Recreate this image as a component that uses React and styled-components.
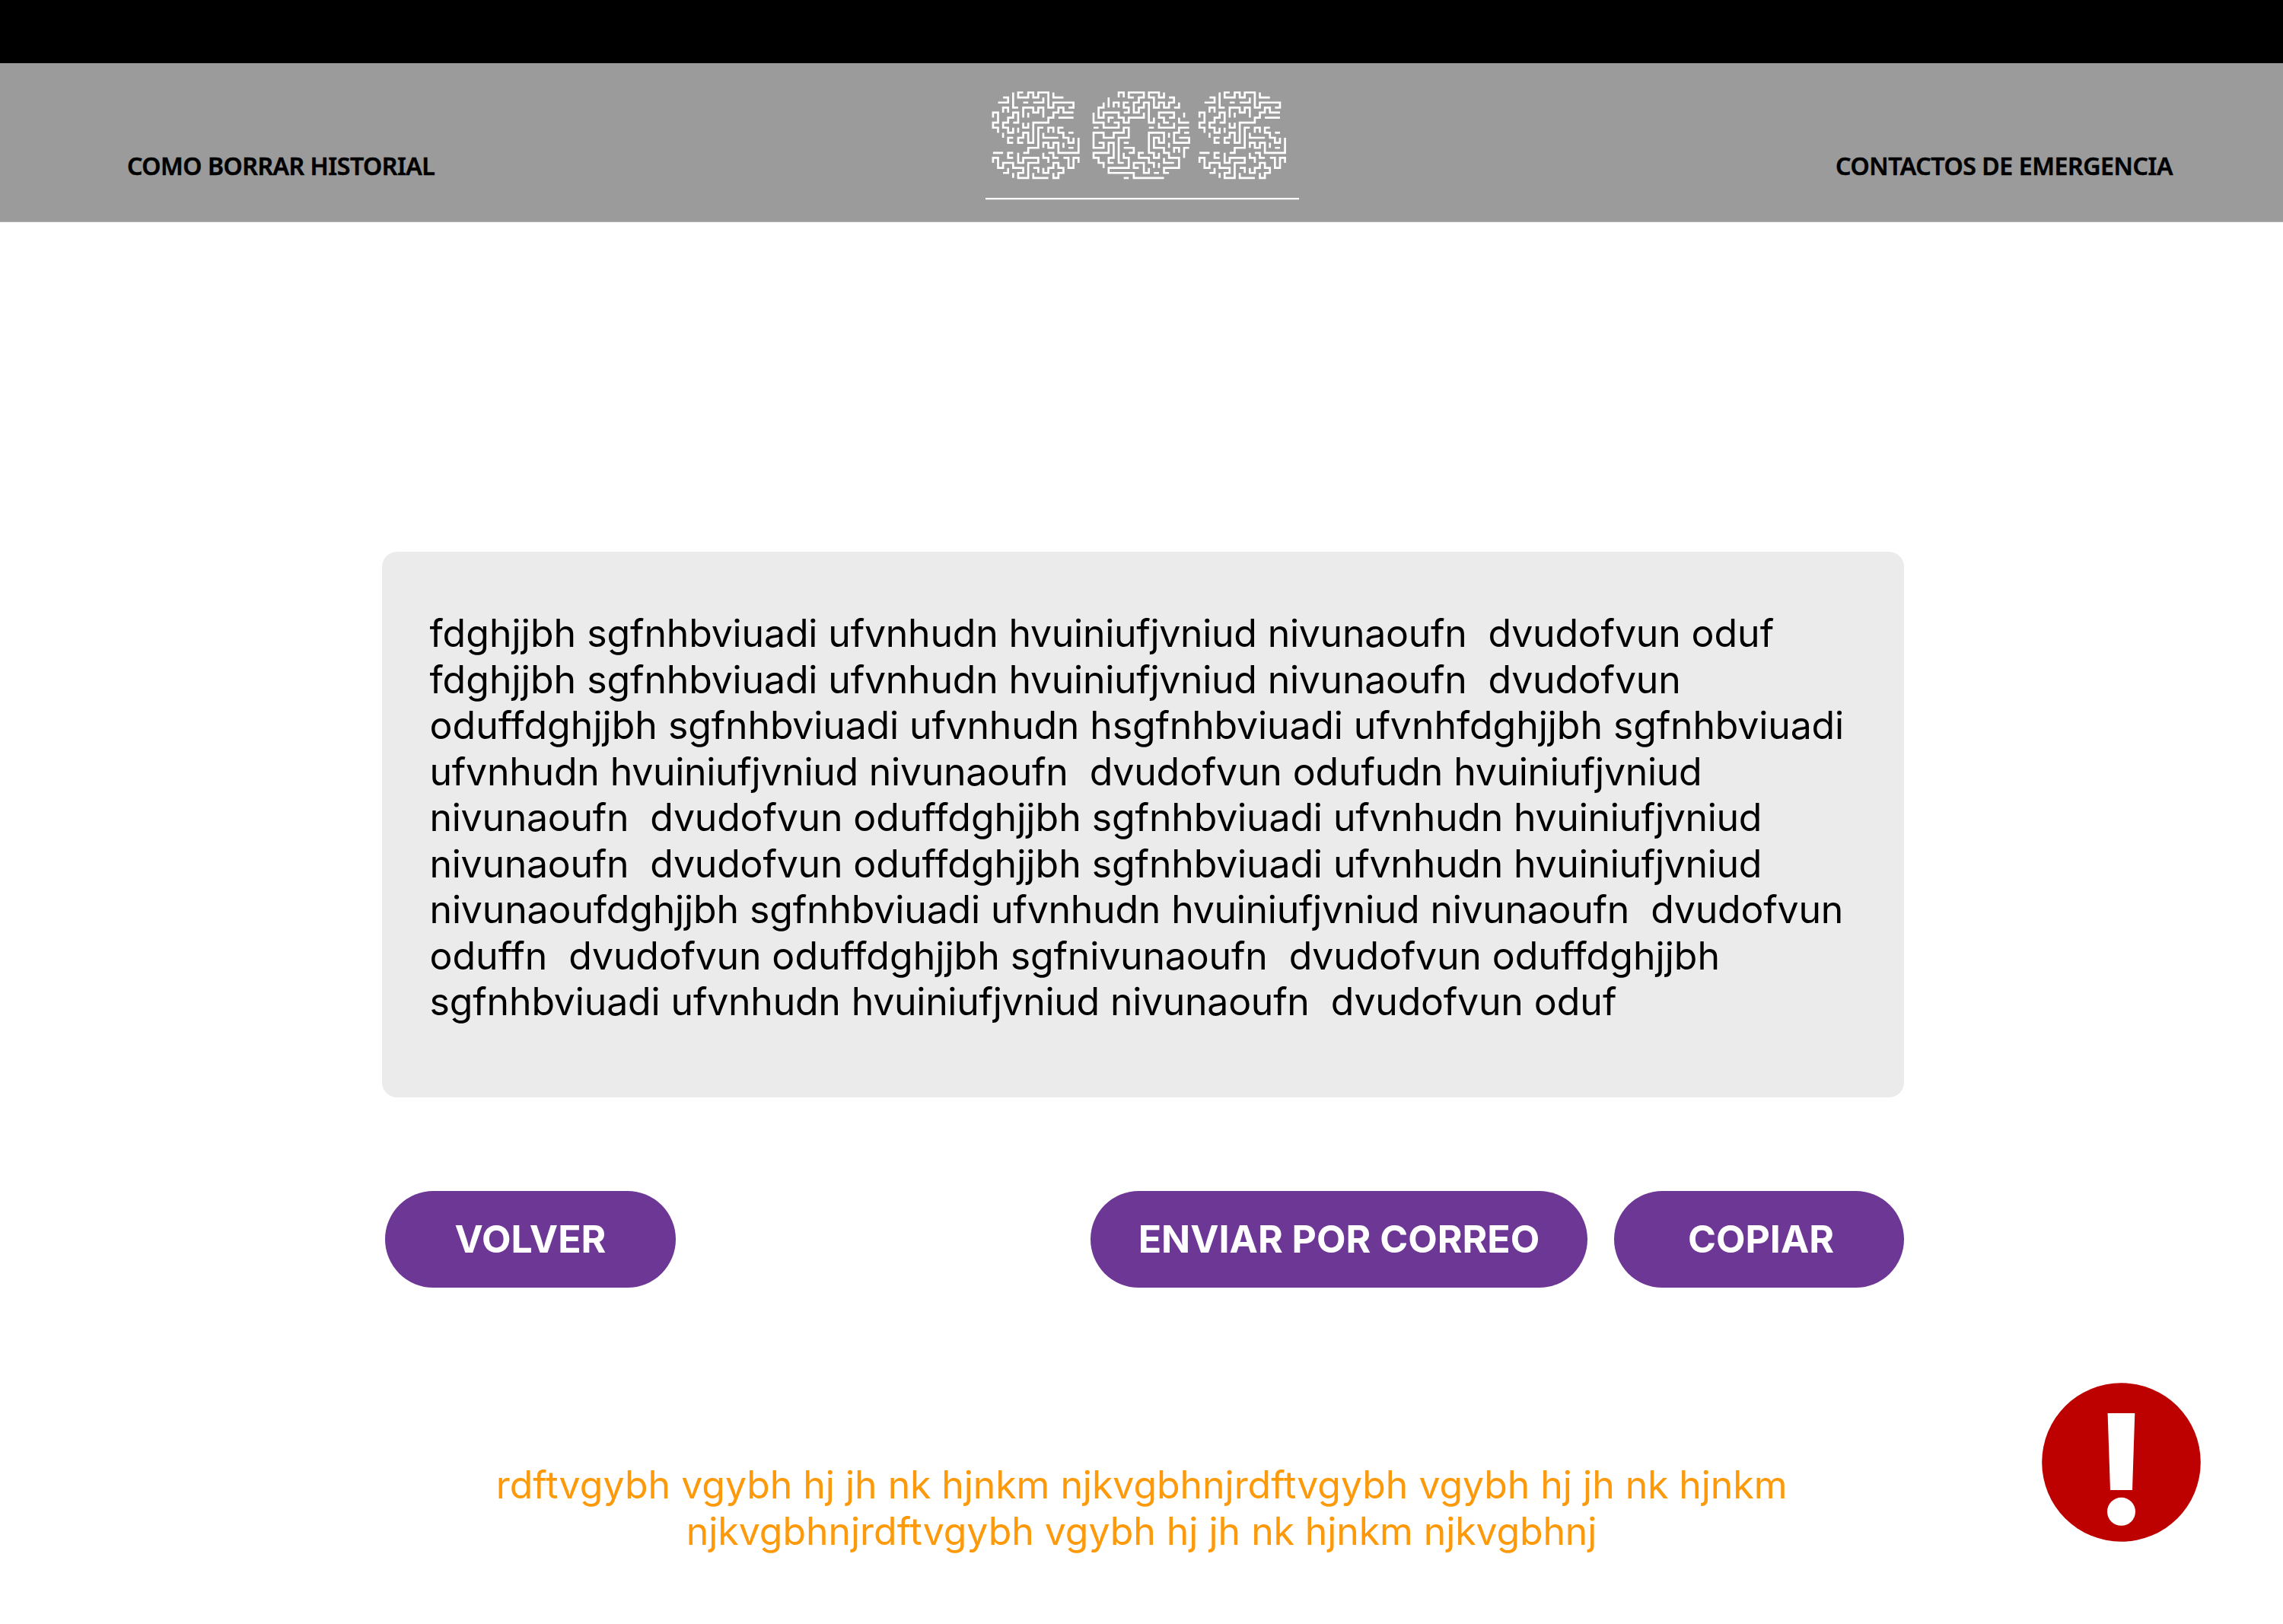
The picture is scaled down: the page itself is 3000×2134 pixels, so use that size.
import React from "react";
import styled, { createGlobalStyle } from "styled-components";

const GlobalStyle = createGlobalStyle`
  *, *::before, *::after { box-sizing: border-box; }
  body { margin: 0; background: #fff; }
`;

const Page = styled.div`
  width: 3000px;
  height: 2134px;
  overflow: hidden;
  display: flex;
  flex-direction: column;
  background: #fff;
  font-family: Inter, "Liberation Sans", sans-serif;
  font-size: 50px;
  line-height: 60.5px;
  color: #000;
`;

const TopBar = styled.div`
  height: 83px;
  flex: none;
  background: #000;
`;

const Header = styled.header`
  height: 209px;
  flex: none;
  display: grid;
  grid-template-columns: 1fr 412px 1fr;
  padding: 0 145px 0 167px;
  border-bottom: 1px solid #b4b4b4;
  background: #9b9b9b;
`;

const NavLink = styled.a`
  margin-top: 113px;
  justify-self: ${(p) => (p.$end ? "end" : "start")};
  font-family: "Noto Sans", "Open Sans", sans-serif;
  font-size: 32px;
  font-weight: 600;
  line-height: 44px;
  letter-spacing: ${(p) => p.$tracking};
  -webkit-text-stroke: 0.5px #000;
  white-space: nowrap;
`;

const Logo = styled.svg`
  display: block;
  width: 412px;
  height: 150px;
  margin: 31px 0 0 -10px;
  fill: none;
  stroke: #fff;
`;

const Main = styled.main`
  flex: 1;
  display: flex;
  flex-direction: column;
  align-items: flex-start;
  padding: 433px 0 0 502px;
`;

const Panel = styled.section`
  width: 2000px;
  height: 717px;
  padding: 77px 0 0 62.5px;
  border-radius: 20px;
  background: #ebebeb;
`;

const Paragraph = styled.p`
  margin: 0;
  white-space: pre;
`;

const Word = styled.span`
  letter-spacing: ${(p) => p.$tracking}px;
`;

const Actions = styled.div`
  display: flex;
  width: 1996px;
  margin: 123px 0 0 4px;
  gap: 35px;
`;

const Button = styled.button`
  width: ${(p) => p.$width}px;
  height: 127px;
  padding: 0 0 0 ${(p) => p.$indent || 0}px;
  border: 0;
  border-radius: 64px;
  background: #6d3795;
  color: #fff;
  font: inherit;
  font-weight: 700;
  white-space: nowrap;
  margin-right: ${(p) => (p.$pushRest ? "auto" : 0)};
`;

const Bottom = styled.footer`
  display: flex;
  width: 2390px;
  margin-top: 125px;
  align-items: flex-start;
`;

const Note = styled.p`
  width: 1996px;
  margin: 104px 0 0;
  text-align: center;
  white-space: pre;
  color: #fc9a0c;
`;

const AlertIcon = styled.svg`
  flex: none;
  width: 209px;
  height: 209px;
  margin-left: 185px;
`;

const MAZE_S =
  "M4 0V3H5 M6 0H5V1H7V0H8V1H9V0H11V3H12V2H16V3H15 M12 0V1H14 M2 1H3V2H1 M6 2H7 M8 2H10V1 M2 4V3H3V4 " +
  "M6 5V3H8V4H9V3H10V5 M7 4V5 M0 5V4H1V6H0V7H1V8 M4 6H5V4H4V5H3V6H2V7H3V8H4V7 M5 7V8 M2 8V9 M6 6V7H7V6 " +
  "M16 4H14V3H13V4H12V5H11V6H8V10H7V8H6V9H5V10H6 M13 5H16 M10 7H9V11H7V12H6 M11 8V7H12V8 " +
  "M14 7H13V8H14V9H15V10H16V9 M15 8H16 M10 8V9H13 M17 9V12H13V10H12V11H11V10H10V11 M14 10V11 M15 11H16 " +
  "M4 9H3V10H4 M0 12H2 M4 12H3V13H4 M5 12V14H6V13H9V14H7V17H5V16H6V15H4V14H2V15H1V13H0V14 " +
  "M10 12V13H11V14 M11 12H12V13H13 M14 13H15V15H16V13H17V14 M2 16H3V15 M4 16V17 M8 15H9V16 M8 16V17H11 " +
  "M10 15V16H11V15H12V14H13V15H14V16H13V17H12V16";

const MAZE_O =
  "M5 1V0H6V1 M8 1H7V0H10V1H9V2H8V4H9V3H10V2H11V6H12V5 M14 0V1H13V0H11V1H12V3H13V2H14V3H15V2H16V1H15 " +
  "M16 3H17V2 M3 1V3 M4 3V2H5V3 M7 2H6V3H7V4H6 M2 2V3H1V5H2V4H5V5H6V6H7V5H10V4 M3 6V5H4 M0 4V6H2V7H5V6H4 " +
  "M0 7H1 M11 7H12 M15 5H16V4H13V5H14V6H15 M18 4V5 M17 5V6H19 M13 6V7H16V6 M19 7H17V8H16V10H19V9H17 " +
  "M18 8H19 M15 8V9 M15 10V11 M1 10H2V11H0V8H2V9H4V8H6V7H7V9H5V14H6 M6 10H7 M6 11H8V12H7 " +
  "M2 15V14H1V13H0V12H3V10H4V13H3V14H4 M6 12V13H7V15H3V16H8V17H14 M6 17H7 " +
  "M13 12V13H12V12H11V8H14V10H13V9H12V11H14V12H15V13H17V15H14V16H15 M14 13V14H16 M16 12V11H17V12 " +
  "M19 11H18V13 M10 12H9V13H11V14H12V15 M13 14V15 M12 16H13 M9 15H8V14H10V16H11V15";

const PITCH = 6.61;

const LETTERS = [
  { x: 9.9, path: MAZE_S },
  { x: 142, path: MAZE_O },
  { x: 281.2, path: MAZE_S },
];

function MazeLogo() {
  return (
    <Logo viewBox="0 0 412 150" role="img" aria-label="SOS">
      {LETTERS.map(({ x, path }) => (
        <path
          key={x}
          d={path}
          transform={`translate(${x} 7.5) scale(${PITCH})`}
          strokeWidth={2.65 / PITCH}
        />
      ))}
      <path d="M0 147.2H412" strokeWidth="2.2" />
    </Logo>
  );
}

// Per-letter advance corrections, in pixels, spread evenly over each word.
const ADVANCE = { u: -0.47, n: -0.47, i: -0.47, v: -0.47, f: 0.45, t: 0.6 };

function Tracked({ text }) {
  return text.split(/(\s+)/).map((part, i) => {
    if (!part.trim()) return part;
    const total = [...part].reduce((sum, ch) => sum + (ADVANCE[ch] || 0), 0);
    return (
      <Word key={i} $tracking={(total / part.length).toFixed(3)}>
        {part}
      </Word>
    );
  });
}

const BODY = [
  "fdghjjbh sgfnhbviuadi ufvnhudn hvuiniufjvniud nivunaoufn  dvudofvun oduf",
  "fdghjjbh sgfnhbviuadi ufvnhudn hvuiniufjvniud nivunaoufn  dvudofvun",
  "oduffdghjjbh sgfnhbviuadi ufvnhudn hsgfnhbviuadi ufvnhfdghjjbh sgfnhbviuadi",
  "ufvnhudn hvuiniufjvniud nivunaoufn  dvudofvun odufudn hvuiniufjvniud",
  "nivunaoufn  dvudofvun oduffdghjjbh sgfnhbviuadi ufvnhudn hvuiniufjvniud",
  "nivunaoufn  dvudofvun oduffdghjjbh sgfnhbviuadi ufvnhudn hvuiniufjvniud",
  "nivunaoufdghjjbh sgfnhbviuadi ufvnhudn hvuiniufjvniud nivunaoufn  dvudofvun",
  "oduffn  dvudofvun oduffdghjjbh sgfnivunaoufn  dvudofvun oduffdghjjbh",
  "sgfnhbviuadi ufvnhudn hvuiniufjvniud nivunaoufn  dvudofvun oduf",
].join("\n");

const NOTE = [
  "rdftvgybh vgybh hj jh nk hjnkm njkvgbhnjrdftvgybh vgybh hj jh nk hjnkm",
  "njkvgbhnjrdftvgybh vgybh hj jh nk hjnkm njkvgbhnj",
].join("\n");

export default function App() {
  return (
    <Page>
      <GlobalStyle />
      <TopBar />
      <Header>
        <NavLink $tracking="-0.45px">COMO BORRAR HISTORIAL</NavLink>
        <MazeLogo />
        <NavLink $end $tracking="-0.4px">CONTACTOS DE EMERGENCIA</NavLink>
      </Header>
      <Main>
        <Panel>
          <Paragraph>
            <Tracked text={BODY} />
          </Paragraph>
        </Panel>
        <Actions>
          <Button $width={382} $pushRest>VOLVER</Button>
          <Button $width={653}>ENVIAR POR CORREO</Button>
          <Button $width={381} $indent={5}>COPIAR</Button>
        </Actions>
        <Bottom>
          <Note>
            <Tracked text={NOTE} />
          </Note>
          <AlertIcon viewBox="0 0 209 209" role="img" aria-label="Alerta">
            <circle cx="104.5" cy="104.5" r="104.3" fill="#bd0000" />
            <path d="M86.6 40H122.3L119 141H90Z" fill="#fff" />
            <circle cx="104.5" cy="169.3" r="18.5" fill="#fff" />
          </AlertIcon>
        </Bottom>
      </Main>
    </Page>
  );
}
